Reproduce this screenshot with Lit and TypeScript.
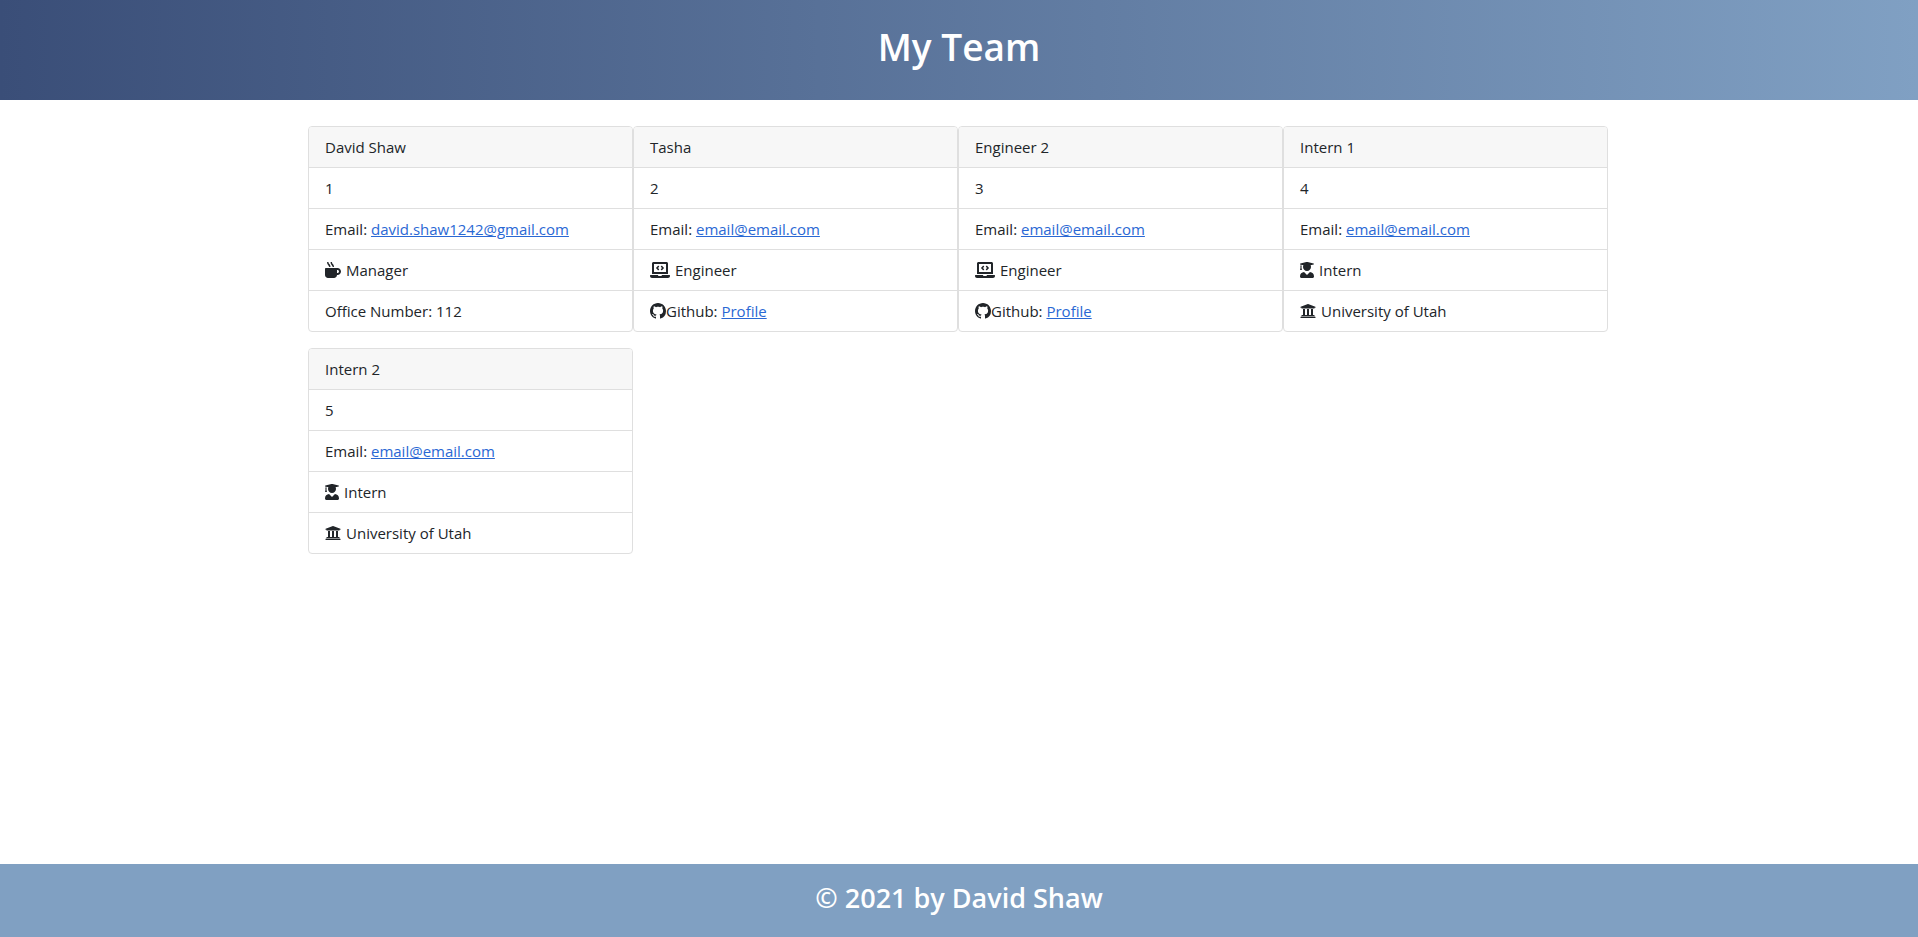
import { LitElement, html, css, svg, nothing } from "lit";
import { customElement, property } from "lit/decorators.js";

type IconName = "mug" | "laptop" | "graduate" | "university" | "github";

interface Detail {
  icon?: IconName;
  tight?: boolean;
  text: string;
  link?: { label: string; href: string };
}

interface Member {
  name: string;
  id: number;
  email: string;
  role: Detail;
  extra: Detail;
}

const ICONS: Record<IconName, { width: number; height: number; path: string }> = {
  mug: {
    width: 512,
    height: 512,
    path: "M127.1 146.5c1.3 7.7 8 13.5 16 13.5h16.5c9.8 0 17.6-8.5 16.3-18-3.8-28.2-16.4-54.2-36.6-74.7-14.4-14.7-23.6-33.3-26.4-53.5C111.8 5.9 105 0 96.8 0H80.4C70.6 0 63 8.5 64.1 18c3.9 31.9 18 61.3 40.6 84.4 12 12.2 19.7 27.5 22.4 44.1zm112 0c1.3 7.7 8 13.5 16 13.5h16.5c9.8 0 17.6-8.5 16.3-18-3.8-28.2-16.4-54.2-36.6-74.7-14.4-14.7-23.6-33.3-26.4-53.5C223.8 5.9 217 0 208.8 0h-16.4c-9.8 0-17.5 8.5-16.3 18 3.9 31.9 18 61.3 40.6 84.4 12 12.2 19.7 27.5 22.4 44.1zM400 192H32c-17.7 0-32 14.3-32 32v192c0 53 43 96 96 96h192c53 0 96-43 96-96h16c61.8 0 112-50.2 112-112s-50.2-112-112-112zm0 160h-16v-96h16c26.5 0 48 21.5 48 48s-21.5 48-48 48z",
  },
  laptop: {
    width: 640,
    height: 512,
    path: "M255.03 261.65c6.25 6.25 16.38 6.25 22.63 0l11.31-11.31c6.25-6.25 6.25-16.38 0-22.63L253.25 192l35.71-35.72c6.25-6.25 6.25-16.38 0-22.63l-11.31-11.31c-6.25-6.25-16.38-6.25-22.63 0l-58.34 58.34c-6.25 6.25-6.25 16.38 0 22.63l58.35 58.34zm96.01-11.3l11.31 11.31c6.25 6.25 16.38 6.25 22.63 0l58.34-58.34c6.25-6.25 6.25-16.38 0-22.63l-58.34-58.34c-6.25-6.25-16.38-6.25-22.63 0l-11.31 11.31c-6.25 6.25-6.25 16.38 0 22.63L386.75 192l-35.71 35.72c-6.25 6.25-6.25 16.38 0 22.63zM624 416H381.54c-.74 19.81-14.71 32-32.74 32H288c-18.69 0-33.02-17.47-32.77-32H16c-8.8 0-16 7.2-16 16v16c0 35.2 28.8 64 64 64h512c35.2 0 64-28.8 64-64v-16c0-8.8-7.2-16-16-16zM576 48c0-26.4-21.6-48-48-48H112C85.6 0 64 21.6 64 48v336h512V48zm-64 272H128V64h384v256z",
  },
  graduate: {
    width: 448,
    height: 512,
    path: "M319.4 320.6L224 416l-95.4-95.4C57.1 323.7 0 382.2 0 454.4v9.6c0 26.5 21.5 48 48 48h352c26.5 0 48-21.5 48-48v-9.6c0-72.2-57.1-130.7-128.6-133.8zM13.6 79.8l6.4 1.5v58.4c-7 4.2-12 11.5-12 20.3 0 8.4 4.6 15.4 11.1 19.7L3.5 242c-1.7 6.9 2.1 14 7.6 14h41.8c5.5 0 9.3-7.1 7.6-14l-15.6-62.3C51.4 175.4 56 168.4 56 160c0-8.8-5-16.1-12-20.3V87.1l66 15.9c-8.6 17.2-14 36.4-14 57 0 70.7 57.3 128 128 128s128-57.3 128-128c0-20.6-5.3-39.8-14-57l96.3-23.2c18.2-4.4 18.2-27.1 0-31.5l-190.4-46c-13-3.1-26.7-3.1-39.7 0L13.6 48.2c-18.1 4.4-18.1 27.2 0 31.6z",
  },
  university: {
    width: 512,
    height: 512,
    path: "M496 128v16a8 8 0 0 1-8 8h-24v12c0 6.627-5.373 12-12 12H60c-6.627 0-12-5.373-12-12v-12H24a8 8 0 0 1-8-8v-16a8 8 0 0 1 4.941-7.392l232-88a7.996 7.996 0 0 1 6.118 0l232 88A8 8 0 0 1 496 128zm-24 304H40c-13.255 0-24 10.745-24 24v16a8 8 0 0 0 8 8h464a8 8 0 0 0 8-8v-16c0-13.255-10.745-24-24-24zM96 192v192H60c-6.627 0-12 5.373-12 12v20h416v-20c0-6.627-5.373-12-12-12h-36V192h-64v192h-64V192h-64v192h-64V192H96z",
  },
  github: {
    width: 16,
    height: 16,
    path: "M8 0C3.58 0 0 3.58 0 8c0 3.54 2.29 6.53 5.47 7.59.4.07.55-.17.55-.38 0-.19-.01-.82-.01-1.49-2.01.37-2.53-.49-2.69-.94-.09-.23-.48-.94-.82-1.13-.28-.15-.68-.52-.01-.53.63-.01 1.08.58 1.23.82.72 1.21 1.87.87 2.33.66.07-.52.28-.87.51-1.07-1.78-.2-3.64-.89-3.64-3.95 0-.87.31-1.59.82-2.15-.08-.2-.36-1.02.08-2.12 0 0 .67-.21 2.2.82.64-.18 1.32-.27 2-.27s1.36.09 2 .27c1.53-1.04 2.2-.82 2.2-.82.44 1.1.16 1.92.08 2.12.51.56.82 1.27.82 2.15 0 3.07-1.87 3.75-3.65 3.95.29.25.54.73.54 1.48 0 1.07-.01 1.93-.01 2.2 0 .21.15.46.55.38A8.01 8.01 0 0 0 16 8c0-4.42-3.58-8-8-8z",
  },
};

const engineer: Detail = { icon: "laptop", text: "Engineer" };
const github: Detail = {
  icon: "github",
  tight: true,
  text: "Github: ",
  link: { label: "Profile", href: "#profile" },
};
const intern: Detail = { icon: "graduate", text: "Intern" };
const school: Detail = { icon: "university", text: "University of Utah" };

const TEAM: Member[] = [
  {
    name: "David Shaw",
    id: 1,
    email: "david.shaw1242@gmail.com",
    role: { icon: "mug", text: "Manager" },
    extra: { text: "Office Number: 112" },
  },
  { name: "Tasha", id: 2, email: "email@email.com", role: engineer, extra: github },
  { name: "Engineer 2", id: 3, email: "email@email.com", role: engineer, extra: github },
  { name: "Intern 1", id: 4, email: "email@email.com", role: intern, extra: school },
  { name: "Intern 2", id: 5, email: "email@email.com", role: intern, extra: school },
];

@customElement("member-card")
class MemberCard extends LitElement {
  @property({ attribute: false }) member!: Member;

  static styles = css`
    :host {
      display: block;
      box-sizing: border-box;
      border: 1px solid #dfdfdf;
      border-radius: 4px;
      background: #fff;
      overflow: hidden;
    }
    .name,
    .row {
      padding: 8px 16px;
      line-height: 24px;
    }
    .name {
      background: #f7f7f7;
    }
    .rows {
      margin: 0;
      padding: 0;
      list-style: none;
    }
    .row {
      border-top: 1px solid #dfdfdf;
    }
    .link {
      color: #2a68d4;
      text-decoration: underline;
    }
    .icon {
      height: 16px;
      vertical-align: -2px;
      fill: currentColor;
    }
    .spaced {
      margin-right: 5px;
    }
  `;

  private renderIcon(name: IconName, tight = false) {
    const { width, height, path } = ICONS[name];
    return html`<svg
      class=${tight ? "icon" : "icon spaced"}
      viewBox="0 0 ${width} ${height}"
      aria-hidden="true"
    >${svg`<path d=${path}></path>`}</svg>`;
  }

  private renderDetail(d: Detail) {
    return html`<li class="row">${d.icon ? this.renderIcon(d.icon, d.tight) : nothing}${d.text}${d.link
      ? html`<a class="link" href=${d.link.href}>${d.link.label}</a>`
      : nothing}</li>`;
  }

  render() {
    const m = this.member;
    return html`
      <div class="name">${m.name}</div>
      <ul class="rows">
        <li class="row">${m.id}</li>
        <li class="row">Email: <a class="link" href="mailto:${m.email}">${m.email}</a></li>
        ${this.renderDetail(m.role)} ${this.renderDetail(m.extra)}
      </ul>
    `;
  }
}

@customElement("app-root")
class AppRoot extends LitElement {
  static styles = css`
    :host {
      display: flex;
      flex-direction: column;
      min-height: 100vh;
      background: #fff;
      color: #212529;
      font-family: "Segoe UI", "Open Sans", "Noto Sans", sans-serif;
      font-size: 15px;
    }
    .header {
      padding: 23px 16px 29px;
      background: linear-gradient(to right, #3a4e78, #80a0c3);
      color: #fff;
      text-align: center;
    }
    .title {
      margin: 0;
      font-size: 37px;
      line-height: 48px;
      font-weight: 600;
    }
    .team {
      box-sizing: border-box;
      width: 100%;
      max-width: 1302px;
      margin: 0 auto;
      padding: 26px 0 16px;
      flex: 1;
      display: flex;
      flex-wrap: wrap;
      align-content: flex-start;
      row-gap: 16px;
    }
    .card {
      flex: 0 0 325px;
    }
    .footer {
      padding: 17px 16px 22px;
      background: #80a0c2;
      color: #fff;
      text-align: center;
    }
    .copyright {
      margin: 0;
      font-size: 27px;
      line-height: 34px;
      font-weight: 600;
    }
  `;

  render() {
    return html`
      <header class="header"><h1 class="title">My Team</h1></header>
      <main class="team">
        ${TEAM.map((m) => html`<member-card class="card" .member=${m}></member-card>`)}
      </main>
      <footer class="footer"><h3 class="copyright">© 2021 by David Shaw</h3></footer>
    `;
  }
}
